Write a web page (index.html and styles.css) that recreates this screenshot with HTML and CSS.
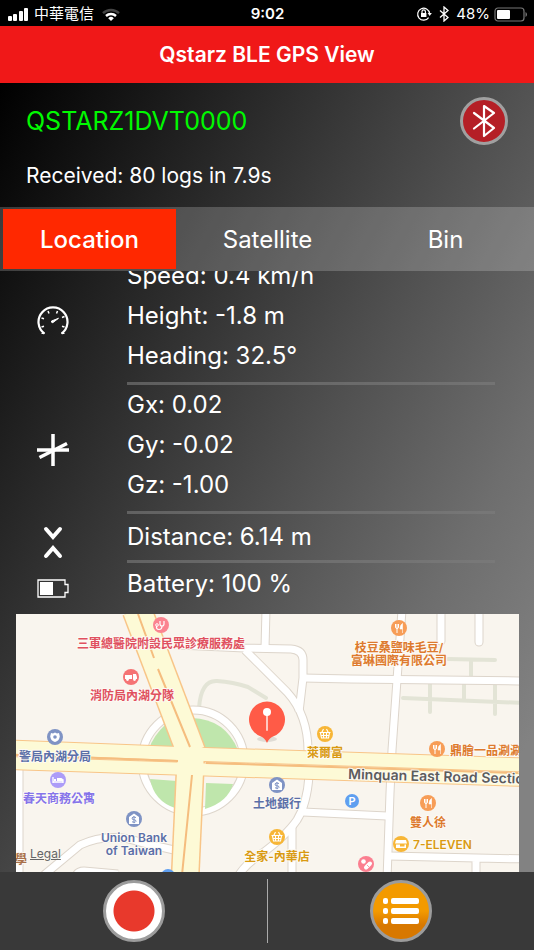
FILE: index.html
```
<!DOCTYPE html>
<html lang="en">

<head>
    <meta charset="UTF-8">
    <meta name="viewport" content="width=device-width, initial-scale=1.0">
    <title>Qstarz BLE GPS View</title>
    <link rel="stylesheet" href="styles.css">
</head>

<body>

    <div class="status-bar">
        <div class="status-left">
            <svg width="22" height="14" viewBox="0 0 22 14" fill="#fff">
                <rect x="0" y="9" width="4" height="5" rx="1" />
                <rect x="5" y="7" width="4" height="7" rx="1" />
                <rect x="11" y="4" width="4" height="10" rx="1" />
                <rect x="16" y="1" width="4" height="13" rx="1" />
            </svg>
            <span class="carrier" lang="zh-Hant">中華電信</span>
            <svg width="18" height="13" viewBox="0 0 18 13" fill="none" stroke-width="2.4">
                <path d="M1 5.2a11.5 11.5 0 0 1 16 0" stroke="#444" />
                <path d="M4 8a7.4 7.4 0 0 1 10 0" stroke="#fff" />
                <path d="M9 13 6.2 10.2a4 4 0 0 1 5.6 0z" fill="#fff" />
            </svg>
        </div>
        <span class="clock">9:02</span>
        <div class="status-right">
            <svg width="16" height="16" viewBox="0 0 16 16" fill="none" stroke="#fff" stroke-width="1.2">
                <path d="M12.6 11.6a6 6 0 1 1 1-4.2" />
                <path d="M11.6 7h4.2l-2.1 3z" fill="#fff" stroke="none" />
                <rect x="5" y="7" width="5.4" height="4" fill="#fff" stroke="none" />
                <path d="M6 7V5.6a1.7 1.7 0 0 1 3.4 0V7" />
            </svg>
            <svg width="10" height="16" viewBox="0 0 10 16" fill="none" stroke="#fff" stroke-width="1.3">
                <path d="M1 4.500l8 7L5 15V1l4 3.500-8 7" />
            </svg>
            <span>48%</span>
            <svg width="33" height="15" viewBox="0 0 33 15">
                <rect x="1" y="1" width="29" height="13" rx="3" fill="none" stroke="#777" stroke-width="1.2" />
                <rect x="3" y="3" width="13" height="9" rx="1" fill="#fff" />
                <path d="M31.500 5v5q1.500-.6 1.500-2.500t-1.500-2.500" fill="#777" />
            </svg>
        </div>
    </div>

    <header class="title-bar">
        <h1>Qstarz BLE GPS View</h1>
    </header>

    <main>
        <section class="device">
            <div class="device-row">
                <h2>QSTARZ1DVT0000</h2>
                <button class="bluetooth" aria-label="Bluetooth">
                    <svg width="24" height="34" viewBox="0 0 24 34" fill="none" stroke="#fff" stroke-width="2.2" stroke-linejoin="round" stroke-linecap="round">
                        <path d="M2 9l20 15-10 8V2l10 7L2 24.500" />
                    </svg>
                </button>
            </div>
            <p>Received: 80 logs in 7.9s</p>
        </section>

        <nav class="tabs">
            <button class="tab active">Location</button>
            <button class="tab">Satellite</button>
            <button class="tab">Bin</button>
        </nav>

        <div class="content">
            <div class="group">
                <div class="icon">
                    <svg width="32" height="32" viewBox="0 0 32 32" fill="none" stroke="#fff">
                        <path d="M7.500 28.700A14.500 14.500 0 1 1 24.500 28.700" stroke-width="2.200" />
                        <path d="M7.500 28.500h-3M24.500 28.500h3" stroke-width="1" />
                        <path d="M11 6l1 2.500M20.500 6l-1 2.500M4.500 13l2.500.8M27.500 11.500l-2.500 1M4.500 22l2.500-.8M27.500 22l-2.500-.8" stroke-width="1.500" />
                        <path d="M14.500 16l7-2.700-5.500 4.200q-1 .8-1.500-.5z" fill="#fff" />
                    </svg>
                </div>
                <div class="values">
                    <p>Speed: 0.4 km/h</p>
                    <p>Height: -1.8 m</p>
                    <p>Heading: 32.5°</p>
                </div>
            </div>
            <div class="group">
                <div class="icon">
                    <svg width="32" height="32" viewBox="0 0 32 32" fill="none" stroke="#fff" stroke-width="3.500">
                        <path d="M16 0v32M0 16h32" />
                        <path d="M2.500 23.500L30 9.500" />
                    </svg>
                </div>
                <div class="values">
                    <p>Gx: 0.02</p>
                    <p>Gy: -0.02</p>
                    <p>Gz: -1.00</p>
                </div>
            </div>
            <div class="group distance">
                <div class="icon">
                    <svg width="32" height="40" viewBox="0 0 32 40" fill="none" stroke="#fff" stroke-width="4" stroke-linecap="round">
                        <path d="M9 10l7 8 7-8M9 37l7-8 7 8" />
                    </svg>
                </div>
                <div class="values">
                    <p>Distance: 6.14 m</p>
                </div>
            </div>
            <div class="group battery">
                <div class="icon">
                    <svg width="32" height="20" viewBox="0 0 32 20">
                        <path d="M1 1h27v4.500h3v8h-3V18H1z" fill="none" stroke="#fff" stroke-width="1.300" />
                        <rect x="3" y="3" width="13" height="13" fill="#fff" />
                    </svg>
                </div>
                <div class="values">
                    <p>Battery: 100 %</p>
                </div>
            </div>

            <div class="map">
                <svg viewBox="16 614 503 258" preserveAspectRatio="xMidYMid slice">
                    <defs>
                        <g id="streets">
                            <path d="M266 610L265 648" />
                            <path d="M178 645L245 648 291 649Q303 650 303 660L303 678 299 712" />
                            <path d="M245 650L287 692Q309 716 308 755" />
                            <path d="M303 678L350 679 525 681" />
                            <path d="M402 610L397 680 392 750 390 793 387 880" />
                            <path d="M441 606V641M479 606V642" stroke-linecap="round" />
                            <path d="M309 776Q307 804 297 820 286 836 260 855 245 864 237 878" />
                            <path d="M303 812L387 816" />
                            <path d="M292 826V880" />
                            <path d="M389 856L525 859M476 860V880" />
                            <path d="M19 765V880" />
                            <path d="M44 875L80 845Q110 831 143 843L174 850" />
                            <path d="M75 880Q76 871 84 871L118 874" />
                            <ellipse cx="193" cy="761" rx="51" ry="51" />
                        </g>
                        <g id="lanes">
                            <path d="M137 610L191 752" stroke-width="28" />
                            <path d="M191 750L185 880" stroke-width="26" />
                            <path d="M10 747L191 754 525 765" stroke-width="13" />
                            <path d="M10 763L191 769 525 780" stroke-width="12" />
                        </g>
                        <g id="lane-casing">
                            <path d="M137 610L191 752" stroke-width="31" />
                            <path d="M191 750L185 880" stroke-width="29" />
                            <path d="M10 747L191 754 525 765" stroke-width="15" />
                            <path d="M10 763L191 769 525 780" stroke-width="14" />
                        </g>
                        <g id="food">
                            <circle r="8" fill="#f79d57" />
                            <path d="M-3.500-4v3q0 1.500 1.500 1.500T-.500-1V-4M-2-4V5" fill="none" stroke="#fff" stroke-width="1" />
                            <path d="M3.500 5V-4.500Q1 -3 1 1h2.500" fill="#fff" stroke="#fff" stroke-width=".6" />
                        </g>
                        <g id="bank">
                            <circle r="8" fill="#7f93c4" />
                            <path d="M-5-2L0-5.500 5-2V5H-5z" fill="#fff" />
                            <path d="M2-1.500Q-2-3-2-1T0 .8 2 2.400-2 2.800M0-3V4.200" fill="none" stroke="#7f93c4" stroke-width="1" />
                        </g>
                        <g id="basket">
                            <circle r="8" fill="#f7b637" />
                            <path d="M-5.500-1.500h11M-4.500-1L-3.500 4h7L4.500-1M-3.500-1L-1.500-5M3.500-1L1.500-5M-1.500-1v5M1.500-1v5M-4 1.500h8" fill="none" stroke="#fff" stroke-width="1.100" />
                        </g>
                    </defs>

                    <rect x="10" y="600" width="520" height="290" fill="#f9f5ee" />

                    <!-- footpaths -->
                    <g class="paths">
                        <path d="M448 659L495 660M471 660V680M430 683V712M464 683V700M495 683V714M403 698L525 703" />
                        <path d="M199 708Q201 680 217 681T248 687L266 698" />
                    </g>

                    <use href="#streets" class="street-edge" />
                    <use href="#streets" class="street" />

                    <g fill="#bfe6ac">
                        <path d="M149 749Q153 736 166 724L176 749z" />
                        <path d="M192 718Q225 719 238 750L204 749z" />
                        <path d="M150 779L177 781 175 808Q154 801 150 779z" />
                        <path d="M206 783L233 784Q228 802 205 809z" />
                    </g>

                    <use href="#lane-casing" class="lane-edge" />
                    <use href="#lanes" class="lane" />
                    <g fill="none" stroke="#f5bd7e">
                        <path d="M138 614L154 658M158 669L190 747M192 775L182 875" stroke-width="2" />
                        <path d="M16 755L178 761M206 763L518 773" stroke-width="2" />
                    </g>

                    <!-- places -->
                    <g transform="translate(161 625)">
                        <circle r="8" fill="#fb8490" />
                        <path d="M-1-4v3q0 2 2 2t2-2v-3M1 1q0 3.500-3 3.500T-4.500 1" fill="none" stroke="#fff" stroke-width="1.200" />
                        <circle cx="-4" cy="0" r="1.300" fill="none" stroke="#fff" />
                    </g>
                    <g transform="translate(131 677)">
                        <circle r="8" fill="#f57374" />
                        <path d="M-6-2H1V2H-6zM2-3h3l1 3v2H2z" fill="#fff" />
                        <circle cx="-3.500" cy="2.500" r="1.400" fill="#fff" />
                        <circle cx="3.500" cy="2.500" r="1.400" fill="#fff" />
                    </g>
                    <g transform="translate(55 737)">
                        <circle r="8" fill="#7f93c4" />
                        <path d="M-4-4l2 .6L0-4.500l2 1.100L4-4l.8 3.500Q4 4 0 5-4 4-4.800-.5z" fill="#fff" />
                        <circle r="1.800" fill="#7f93c4" />
                    </g>
                    <g transform="translate(58 780)">
                        <circle r="8" fill="#ac9cf8" />
                        <path d="M-5-3v6M-5 2H5V-.5M5 3V0H-1" fill="none" stroke="#fff" stroke-width="1.300" />
                        <path d="M-1-2H3Q5-2 5 1H-1zM-4 1V-1h2V1z" fill="#fff" />
                    </g>
                    <use href="#bank" x="134" y="819" />
                    <use href="#bank" x="277" y="785" />
                    <use href="#basket" x="325" y="734" />
                    <use href="#basket" x="277" y="837" />
                    <use href="#food" x="399" y="628" />
                    <use href="#food" x="437" y="749" />
                    <use href="#food" x="428" y="803" />
                    <g transform="translate(401 844)">
                        <circle r="8" fill="#f7b637" />
                        <path d="M-5-4H5L6-.5H-6zM-5 .5V4H5V.5H3.500V2.500H-1V.5z" fill="#fff" />
                    </g>
                    <g transform="translate(366 864)">
                        <circle r="8" fill="#fb7f90" />
                        <circle cx="-2.500" cy="-2.500" r="2.300" fill="#fff" />
                        <path d="M0 3.500L4-.5" stroke="#fff" stroke-width="4" stroke-linecap="round" />
                        <path d="M1 1l2 2" stroke="#fb7f90" stroke-width=".8" />
                    </g>
                    <circle cx="352" cy="801" r="7" fill="#5f9ff0" />
                    <text x="352" y="805" class="parking">P</text>
                    <circle cx="168" cy="876" r="7" fill="#5f9ff0" />

                    <g class="labels" lang="zh-Hant">
                        <g fill="#e0505f">
                            <text x="161" y="648">三軍總醫院附設民眾診療服務處</text>
                            <text x="132" y="700">消防局內湖分隊</text>
                        </g>
                        <g fill="#5b6fa8">
                            <text x="55" y="761">警局內湖分局</text>
                            <text x="277" y="808">土地銀行</text>
                            <text x="134" y="842">Union Bank</text>
                            <text x="134" y="855">of Taiwan</text>
                        </g>
                        <text x="59" y="803" fill="#8674ea">春天商務公寓</text>
                        <g fill="#dd7a2e">
                            <text x="399" y="652">枝豆桑鹽味毛豆/</text>
                            <text x="399" y="665">富琳國際有限公司</text>
                            <text x="428" y="827">雙人徐</text>
                            <text x="450" y="755" class="start">鼎膾一品涮涮鍋</text>
                        </g>
                        <g fill="#d99a12">
                            <text x="325" y="757">萊爾富</text>
                            <text x="277" y="861">全家-內華店</text>
                            <text x="413" y="849" class="start">7-ELEVEN</text>
                        </g>
                        <text x="15" y="864" class="start" fill="#a9714a">學</text>
                        <text x="348" y="779" class="start road" transform="rotate(1.500 348 779)">Minquan East Road Section 6</text>
                    </g>

                    <!-- current position -->
                    <ellipse cx="267" cy="739" rx="10" ry="3" fill="#000" opacity=".1" />
                    <path d="M267 743q-2-5-6-6.500a18 18 0 1 1 12 0q-4 1.500-6 6.500z" fill="#ff5b47" />
                    <path d="M267 715v15" stroke="#ffc9c2" stroke-width="2" stroke-linecap="round" />
                    <circle cx="267" cy="712" r="4" fill="#fff" />
                </svg>
                <a class="legal" href="#">Legal</a>
            </div>
        </div>
    </main>

    <footer class="toolbar">
        <div class="tool">
            <button class="record" aria-label="Record"></button>
        </div>
        <div class="tool">
            <button class="menu" aria-label="Log list">
                <svg width="36" height="26" viewBox="0 0 36 26" fill="#fff">
                    <rect x="0" y="0" width="5" height="6" rx="2" />
                    <rect x="8" y="0" width="28" height="6" rx="2" />
                    <rect x="0" y="10" width="5" height="6" rx="2" />
                    <rect x="8" y="10" width="28" height="6" rx="2" />
                    <rect x="0" y="20" width="5" height="6" rx="2" />
                    <rect x="8" y="20" width="28" height="6" rx="2" />
                </svg>
            </button>
        </div>
    </footer>

</body>

</html>
```
FILE: styles.css
```
* {
    box-sizing: border-box;
}

body {
    margin: 0;
    height: 100vh;
    display: flex;
    flex-direction: column;
    font-family: Inter, "Noto Sans CJK TC", sans-serif;
    color: #fff;
    background-color: #000;
    overflow: hidden;
}

h1,
h2,
p {
    margin: 0;
    font-weight: normal;
}

button {
    font-family: inherit;
    color: inherit;
    border: none;
    padding: 0;
    cursor: pointer;
}

svg {
    display: block;
    flex-shrink: 0;
}

/* status bar */
.status-bar {
    display: grid;
    grid-template-columns: 1fr auto 1fr;
    align-items: center;
    height: 26px;
    flex-shrink: 0;
    padding: 2px 7px 0 8px;
    font-size: 15px;
    line-height: 20px;
}

.status-left,
.status-right {
    display: flex;
    align-items: center;
}

.status-left {
    gap: 4px;
}

.status-left svg:last-child {
    margin-left: 4px;
}

.status-right {
    justify-content: flex-end;
    gap: 7px;
}

.status-right span {
    margin-right: -3px;
}

.carrier {
    font-size: 15px;
}

.clock {
    font-weight: 600;
}

.title-bar {
    height: 57px;
    flex-shrink: 0;
    display: flex;
    justify-content: center;
    align-items: center;
    background-color: #f01818;
}

.title-bar h1 {
    font-size: 21px;
    font-weight: 600;
}

main {
    flex: 1;
    min-height: 0;
    display: flex;
    flex-direction: column;
    background: linear-gradient(119deg, #000 0%, #505050 53%, #6e6e6e 74%, #828282 92%);
}

/* device */
.device {
    padding: 14px 26px 16px;
    flex-shrink: 0;
}

.device-row {
    display: flex;
    justify-content: space-between;
    align-items: center;
    margin-bottom: 16px;
}

.device h2 {
    font-size: 25px;
    color: #00f900;
}

.device p {
    font-size: 21px;
    line-height: 30px;
}

.bluetooth {
    width: 48px;
    height: 48px;
    display: flex;
    justify-content: center;
    align-items: center;
    border: 3px solid #a0a0a0;
    border-radius: 50%;
    background-color: #b51f26;
}

.tabs {
    display: grid;
    grid-template-columns: repeat(3, 1fr);
    height: 64px;
    flex-shrink: 0;
    padding: 2px 0;
    background-color: rgba(255, 255, 255, 0.2);
}

.tab {
    margin: 0 2px 0 3px;
    font-size: 24px;
    background: none;
}

.tab.active {
    font-weight: 500;
    background-color: #ff2800;
}

/* list stays scrolled to its end */
.content {
    flex: 1;
    min-height: 0;
    display: flex;
    flex-direction: column;
    justify-content: flex-end;
    overflow: hidden;
}

.group {
    display: flex;
    align-items: center;
    flex-shrink: 0;
}

.icon {
    width: 127px;
    padding-left: 37px;
}

.values {
    flex: 1;
    margin-right: 39px;
    padding-bottom: 6px;
    border-bottom: 3px solid rgba(125, 125, 125, 0.6);
    font-size: 24px;
    line-height: 40px;
}

.distance .values {
    padding-bottom: 0;
    line-height: 46px;
}

.battery .values {
    padding-bottom: 9px;
    border-bottom: none;
    line-height: 42px;
}

.map {
    position: relative;
    flex-shrink: 0;
    height: 258px;
    margin: 0 15px 0 16px;
    overflow: hidden;
}

.map svg {
    width: 100%;
    height: 100%;
}

.legal {
    position: absolute;
    left: 14px;
    bottom: 10px;
    font-size: 12px;
    line-height: 16px;
    color: #666;
}

.street-edge,
.street,
.lane-edge,
.lane,
.paths {
    fill: none;
}

.street-edge {
    stroke: #ddd5cb;
    stroke-width: 9px;
}

.street {
    stroke: #fff;
    stroke-width: 7px;
}

.paths {
    stroke: #e3e4d6;
    stroke-width: 4px;
    stroke-linecap: round;
}

.lane-edge {
    stroke: #f8c588;
}

.lane {
    stroke: #fdfad6;
}

.labels text {
    font-size: 12px;
    font-weight: 600;
    text-anchor: middle;
    stroke: #fdfaf4;
    stroke-width: 2px;
    stroke-linejoin: round;
    paint-order: stroke;
}

.labels .start {
    text-anchor: start;
}

.labels .road {
    font-size: 14px;
    fill: #5c5c5c;
}

.parking {
    font-size: 11px;
    font-weight: 600;
    text-anchor: middle;
    fill: #fff;
}

/* bottom toolbar */
.toolbar {
    display: grid;
    grid-template-columns: 1fr 1fr;
    flex-shrink: 0;
    height: 78px;
    padding: 7px 0;
    background-color: #393939;
}

.tool {
    display: flex;
    justify-content: center;
    align-items: center;
}

.tool + .tool {
    border-left: 1px solid #aaa;
}

.record,
.menu {
    width: 62px;
    height: 62px;
    display: flex;
    justify-content: center;
    align-items: center;
    border: 3px solid #9c9c9c;
    border-radius: 50%;
}

.record {
    background: radial-gradient(circle, #e8392c 20px, #fff 21px);
}

.menu {
    background: linear-gradient(#f39a00 50%, #d87800 75%);
}
```
